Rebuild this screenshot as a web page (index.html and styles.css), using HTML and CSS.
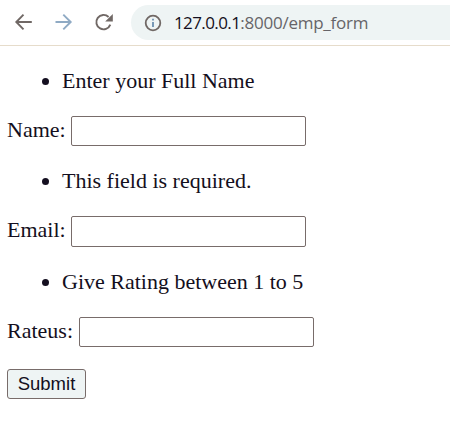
FILE: index.html
```html
<!DOCTYPE html>
<html lang="en">
<head>
<meta charset="utf-8">
<title>Employee form</title>
<link rel="stylesheet" href="styles.css">
</head>
<body>
<header class="toolbar">
  <svg class="nav" viewBox="0 0 120 45" fill="none" stroke-width="1.9" aria-hidden="true">
    <path class="ink" d="M31.8 22H16.8M23.5 14.6 16.3 22l7.2 7.4"/>
    <path class="muted" d="M55.5 22h15M63.3 14.6 70.7 22l-7.4 7.4"/>
    <path class="ink" d="M110.3 24.6A7.2 7.2 0 1 1 108.6 17"/>
    <path class="tip" d="M112.8 14v7.6h-7.6z"/>
  </svg>
  <div class="address">
    <svg class="info" viewBox="0 0 18 18" fill="none" aria-hidden="true">
      <circle class="ink" cx="9" cy="9" r="7.3" stroke-width="1.8"/>
      <path class="mark" d="M9 8v5M9 4.8v1.8" stroke-width="1.8"/>
    </svg>
    <span class="url"><span class="host">127.0.0.1</span>:8000/emp_form</span>
  </div>
</header>
<form class="form">
  <ul class="errors"><li>Enter your Full Name</li></ul>
  <div class="field"><label for="name">Name:</label><input id="name" type="text"></div>
  <ul class="errors"><li>This field is required.</li></ul>
  <div class="field tall"><label for="email">Email:</label><input id="email" type="text"></div>
  <ul class="errors"><li>Give Rating between 1 to 5</li></ul>
  <div class="field"><label for="rate">Rateus:</label><input id="rate" type="text"></div>
  <button class="submit" type="button">Submit</button>
</form>
</body>
</html>
```
FILE: styles.css
```css
* { box-sizing: border-box; }
body {
  margin: 0;
  background: #fff;
  color: #140f20;
  font-family: "Liberation Serif", serif;
  font-size: 22px;
  line-height: 26px;
  overflow: hidden;
}
.toolbar {
  display: flex;
  height: 46px;
  border-bottom: 1px solid #e6dccb;
}
.nav { width: 120px; height: 45px; margin-right: 11px; flex: none; }
.ink { stroke: #706865; }
.muted { stroke: #8faac4; }
.mark { stroke: #6a8fb0; }
.tip { fill: #706865; }
.address {
  display: flex;
  align-items: center;
  flex: 1;
  height: 35px;
  margin-top: 5px;
  padding-left: 13px;
  border-radius: 18px 0 0 18px;
  background: #eef4f4;
}
.info { width: 18px; height: 18px; flex: none; }
.url {
  margin-left: 12px;
  font-family: "Open Sans", sans-serif;
  font-size: 17px;
  letter-spacing: -0.25px;
  white-space: nowrap;
  color: #666468;
}
.host { color: #140f20; letter-spacing: -0.6px; }
.form { padding: 22px 0 0 7px; }
.errors {
  height: 26px;
  margin: 0 0 22px;
  padding: 0;
  list-style: none;
}
.errors li { display: flex; align-items: center; }
.errors li::before {
  content: "";
  width: 7px;
  height: 7px;
  margin: 1px 13px 0 35px;
  border-radius: 50%;
  background: #140f20;
}
.field {
  display: flex;
  height: 30px;
  margin-bottom: 22px;
}
.field.tall { height: 31px; }
.field label { margin-right: 5.6px; line-height: 28px; }
.field input {
  width: 235px;
  height: 100%;
  padding: 1px 3px;
  border: 1px solid #786c6a;
  border-radius: 2px;
  background: #fff;
}
.submit {
  display: block;
  width: 79px;
  height: 30px;
  padding: 0;
  border: 1px solid #786c6a;
  border-radius: 3px;
  background: #eef4f4;
  color: #140f20;
  font: 18.5px/28px "Liberation Sans", sans-serif;
}
```
